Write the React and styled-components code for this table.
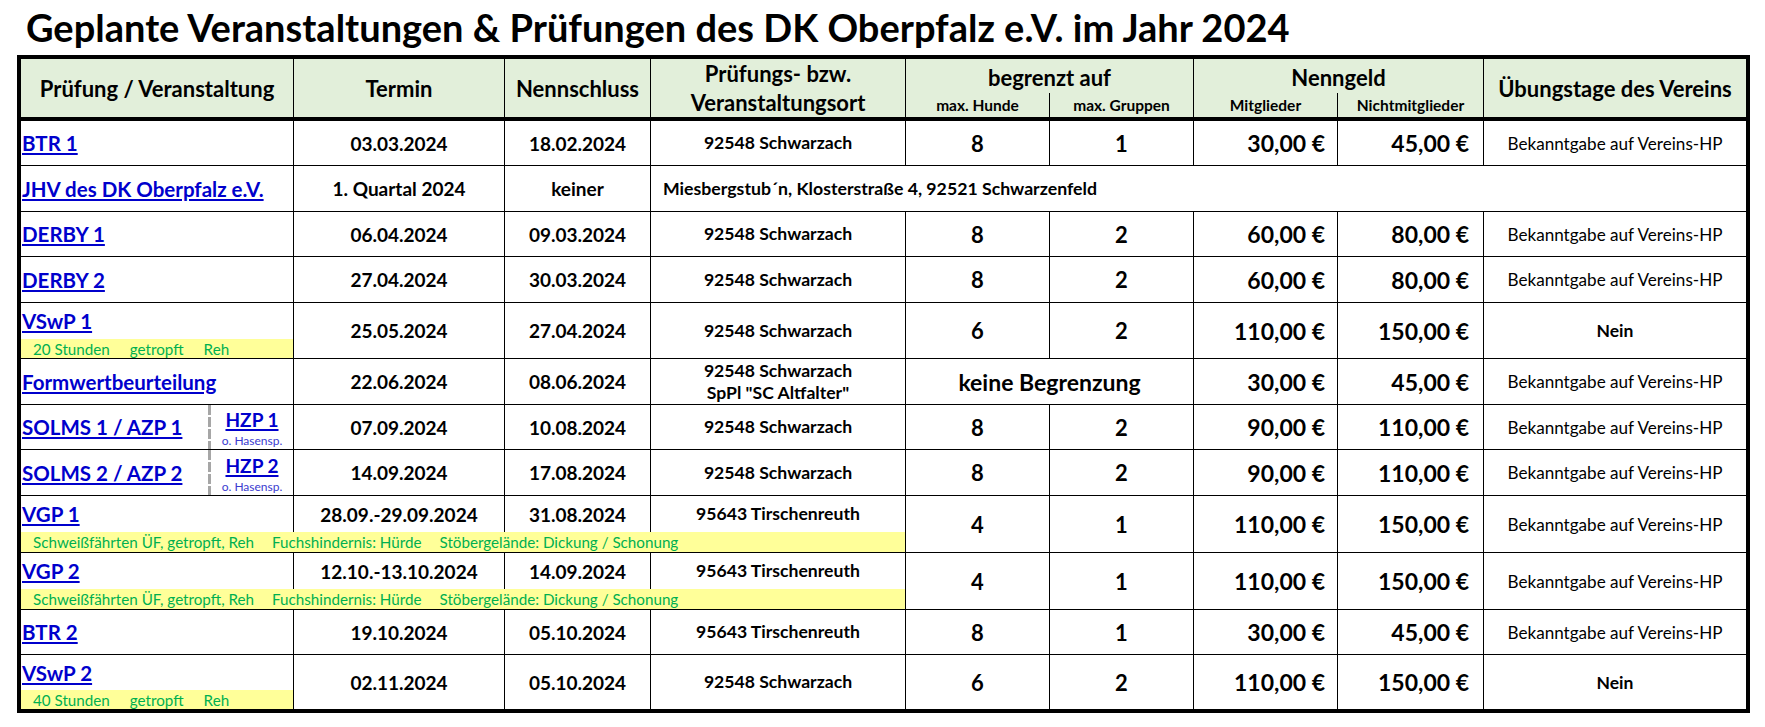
import styled, { createGlobalStyle } from 'styled-components'

const GlobalStyle = createGlobalStyle`
    body {
        margin: 0;
        background: #fff;
        color: #000;
        font-family: Lato, "Open Sans", sans-serif;
    }
`

const COLUMNS = [273, 211, 146, 255, 144, 144, 144, 146, 262]
const INFO = 'Bekanntgabe auf Vereins-HP'
const VGP_NOTE = ['Schweißfährten ÜF, getropft, Reh', 'Fuchshindernis: Hürde', 'Stöbergelände: Dickung / Schonung']

const events = [
    { name: 'BTR 1', termin: '03.03.2024', schluss: '18.02.2024', ort: ['92548 Schwarzach'], hunde: '8', gruppen: '1', mitglieder: '30,00 €', nicht: '45,00 €', info: INFO, height: 45 },
    { name: 'JHV des DK Oberpfalz e.V.', termin: '1. Quartal 2024', schluss: 'keiner', address: 'Miesbergstub´n, Klosterstraße 4, 92521 Schwarzenfeld', height: 46 },
    { name: 'DERBY 1', termin: '06.04.2024', schluss: '09.03.2024', ort: ['92548 Schwarzach'], hunde: '8', gruppen: '2', mitglieder: '60,00 €', nicht: '80,00 €', info: INFO, height: 45 },
    { name: 'DERBY 2', termin: '27.04.2024', schluss: '30.03.2024', ort: ['92548 Schwarzach'], hunde: '8', gruppen: '2', mitglieder: '60,00 €', nicht: '80,00 €', info: INFO, height: 46 },
    { name: 'VSwP 1', termin: '25.05.2024', schluss: '27.04.2024', ort: ['92548 Schwarzach'], hunde: '6', gruppen: '2', mitglieder: '110,00 €', nicht: '150,00 €', info: 'Nein', note: ['20 Stunden', 'getropft', 'Reh'], height: 56 },
    { name: 'Formwertbeurteilung', termin: '22.06.2024', schluss: '08.06.2024', ort: ['92548 Schwarzach', 'SpPl "SC Altfalter"'], noLimit: 'keine Begrenzung', mitglieder: '30,00 €', nicht: '45,00 €', info: INFO, height: 46 },
    { name: 'SOLMS 1 / AZP 1', hzp: 'HZP 1', termin: '07.09.2024', schluss: '10.08.2024', ort: ['92548 Schwarzach'], hunde: '8', gruppen: '2', mitglieder: '90,00 €', nicht: '110,00 €', info: INFO, height: 45 },
    { name: 'SOLMS 2 / AZP 2', hzp: 'HZP 2', termin: '14.09.2024', schluss: '17.08.2024', ort: ['92548 Schwarzach'], hunde: '8', gruppen: '2', mitglieder: '90,00 €', nicht: '110,00 €', info: INFO, height: 46 },
    { name: 'VGP 1', termin: '28.09.-29.09.2024', schluss: '31.08.2024', ort: ['95643 Tirschenreuth'], hunde: '4', gruppen: '1', mitglieder: '110,00 €', nicht: '150,00 €', info: INFO, wideNote: VGP_NOTE, height: 57 },
    { name: 'VGP 2', termin: '12.10.-13.10.2024', schluss: '14.09.2024', ort: ['95643 Tirschenreuth'], hunde: '4', gruppen: '1', mitglieder: '110,00 €', nicht: '150,00 €', info: INFO, wideNote: VGP_NOTE, height: 57 },
    { name: 'BTR 2', termin: '19.10.2024', schluss: '05.10.2024', ort: ['95643 Tirschenreuth'], hunde: '8', gruppen: '1', mitglieder: '30,00 €', nicht: '45,00 €', info: INFO, height: 45 },
    { name: 'VSwP 2', termin: '02.11.2024', schluss: '05.10.2024', ort: ['92548 Schwarzach'], hunde: '6', gruppen: '2', mitglieder: '110,00 €', nicht: '150,00 €', info: 'Nein', note: ['40 Stunden', 'getropft', 'Reh'], height: 54 },
]

// VGP rows are split into a top part and the yellow note strip below
const rowTracks = [34, 28, ...events.flatMap(e => (e.wideNote ? [36, e.height - 36] : [e.height]))]

const App = () => {
    return (
        <>
            <GlobalStyle />
            <Page>
                <Title>Geplante Veranstaltungen &amp; Prüfungen des DK Oberpfalz e.V. im Jahr 2024</Title>
                <Sheet $rows={rowTracks}>
                    <HeadCell $rows={2}>Prüfung / Veranstaltung</HeadCell>
                    <HeadCell $rows={2}>Termin</HeadCell>
                    <HeadCell $rows={2}>Nennschluss</HeadCell>
                    <HeadCell $rows={2}>Prüfungs- bzw.<br />Veranstaltungsort</HeadCell>
                    <GroupHead $cols={2}>begrenzt auf</GroupHead>
                    <GroupHead $cols={2}>Nenngeld</GroupHead>
                    <HeadCell $rows={2} $end>Übungstage des Vereins</HeadCell>
                    <SubHead>max. Hunde</SubHead>
                    <SubHead>max. Gruppen</SubHead>
                    <SubHead>Mitglieder</SubHead>
                    <SubHead>Nichtmitglieder</SubHead>
                    {events.map((e, i) => (
                        <EventRow key={e.name} event={e} foot={i === events.length - 1} />
                    ))}
                </Sheet>
            </Page>
        </>
    )
}

const EventRow = ({ event: e, foot }) => {
    const span = e.wideNote ? 2 : 1
    const top = !!e.wideNote

    if (e.address) {
        return (
            <>
                <EventCell $foot={foot}><Link href='#'>{e.name}</Link></EventCell>
                <DateCell $foot={foot}>{e.termin}</DateCell>
                <DateCell $foot={foot}>{e.schluss}</DateCell>
                <AddressCell $cols={6} $end $foot={foot}>{e.address}</AddressCell>
            </>
        )
    }

    return (
        <>
            {e.note ? (
                <EventCell $foot={foot} $stack>
                    <LinkBox><Link href='#'>{e.name}</Link></LinkBox>
                    <NoteStrip>{e.note.map(n => <span key={n}>{n}</span>)}</NoteStrip>
                </EventCell>
            ) : e.hzp ? (
                <EventCell $foot={foot} $split>
                    <LinkBox $width={186}><Link href='#'>{e.name}</Link></LinkBox>
                    <Divider />
                    <HzpBox>
                        <Link href='#' $size={19}>{e.hzp}</Link>
                        <HzpNote>o. Hasensp.</HzpNote>
                    </HzpBox>
                </EventCell>
            ) : (
                <EventCell $foot={foot} $open={top}><Link href='#'>{e.name}</Link></EventCell>
            )}
            <DateCell $foot={foot} $open={top}>{e.termin}</DateCell>
            <DateCell $foot={foot} $open={top}>{e.schluss}</DateCell>
            <PlaceCell $foot={foot} $open={top}>
                {e.ort.map(line => <div key={line}>{line}</div>)}
            </PlaceCell>
            {e.noLimit ? (
                <CountCell $cols={2} $foot={foot} $size={23}>{e.noLimit}</CountCell>
            ) : (
                <>
                    <CountCell $rows={span} $foot={foot}>{e.hunde}</CountCell>
                    <CountCell $rows={span} $foot={foot}>{e.gruppen}</CountCell>
                </>
            )}
            <FeeCell $rows={span} $foot={foot}>{e.mitglieder}</FeeCell>
            <FeeCell $rows={span} $foot={foot} $pad={14}>{e.nicht}</FeeCell>
            <InfoCell $rows={span} $foot={foot} $end $strong={e.info === 'Nein'}>{e.info}</InfoCell>
            {e.wideNote && (
                <WideNote $cols={4} $foot={foot}>{e.wideNote.map(n => <span key={n}>{n}</span>)}</WideNote>
            )}
        </>
    )
}

export default App

const Page = styled.div`
    width: 1765px;
    height: 727px;
    box-sizing: border-box;
`

const Title = styled.h1`
    margin: 0;
    box-sizing: border-box;
    height: 55px;
    padding: 2px 0 0 26px;
    font-size: 38px;
    line-height: 51px;
    font-weight: 700;
    white-space: nowrap;
`

const Sheet = styled.div`
    margin-left: 17px;
    width: ${COLUMNS.reduce((a, b) => a + b, 0) + 8}px;
    box-sizing: border-box;
    border: 4px solid #000;
    display: grid;
    grid-template-columns: ${COLUMNS.map(c => `${c}px`).join(' ')};
    grid-template-rows: ${({ $rows }) => $rows.map(r => `${r}px`).join(' ')};
`

const Cell = styled.div`
    box-sizing: border-box;
    min-width: 0;
    display: flex;
    flex-direction: column;
    justify-content: center;
    align-items: center;
    text-align: center;
    white-space: nowrap;
    overflow: hidden;
    grid-column: span ${({ $cols = 1 }) => $cols};
    grid-row: span ${({ $rows = 1 }) => $rows};
    border-right: ${({ $end }) => ($end ? 'none' : '1px solid #000')};
    border-bottom: ${({ $foot, $open }) => ($foot || $open ? 'none' : '1px solid #000')};
`

const HeadCell = styled(Cell)`
    background: #e2efda;
    font-size: 22px;
    font-weight: 700;
    line-height: 29px;
    border-bottom: 4px solid #000;
`

const GroupHead = styled(HeadCell)`
    border-bottom: none;
    padding-top: 2px;
`

const SubHead = styled(HeadCell)`
    font-size: 15.5px;
    line-height: 18px;
    justify-content: flex-end;
    padding-bottom: 3px;
`

const EventCell = styled(Cell)`
    align-items: ${({ $stack }) => ($stack ? 'stretch' : 'flex-start')};
    flex-direction: ${({ $split }) => ($split ? 'row' : 'column')};
    justify-content: ${({ $split }) => ($split ? 'flex-start' : 'center')};
    padding-left: ${({ $stack, $split }) => ($stack || $split ? 0 : 1)}px;
    ${({ $split }) => $split && 'align-items: stretch;'}
`

const LinkBox = styled.div`
    flex: ${({ $width }) => ($width ? `0 0 ${$width}px` : '1')};
    display: flex;
    align-items: center;
    padding-left: 1px;
`

const Link = styled.a`
    color: #0000cc;
    font-size: ${({ $size = 20.5 }) => $size}px;
    font-weight: 700;
    line-height: 24px;
    text-decoration: underline;
    text-decoration-thickness: 2px;
    text-underline-offset: 2px;
`

const Divider = styled.span`
    flex: 0 0 3px;
    background: repeating-linear-gradient(to bottom, #a6a6a6 0 10px, transparent 10px 12px);
`

const HzpBox = styled.div`
    flex: 1;
    display: flex;
    flex-direction: column;
    align-items: center;
    justify-content: center;
    padding-top: 4px;
`

const HzpNote = styled.span`
    color: #3b3bd0;
    font-size: 12px;
    line-height: 18px;
`

const NoteStrip = styled.div`
    flex: 0 0 19px;
    display: flex;
    align-items: center;
    gap: 20px;
    padding-left: 12px;
    background: #ffff99;
    color: #00b050;
    font-size: 15.2px;
`

const WideNote = styled(Cell)`
    flex-direction: row;
    justify-content: flex-start;
    gap: 18px;
    padding-left: 12px;
    background: #ffff99;
    color: #00b050;
    font-size: 15.2px;
`

const DateCell = styled(Cell)`
    font-size: 19px;
    font-weight: 700;
`

const PlaceCell = styled(Cell)`
    font-size: 17.6px;
    font-weight: 700;
    line-height: 22px;
`

const AddressCell = styled(Cell)`
    align-items: flex-start;
    padding-left: 12px;
    font-size: 17.7px;
    font-weight: 700;
`

const CountCell = styled(Cell)`
    font-size: ${({ $size = 22 }) => $size}px;
    font-weight: 700;
`

const FeeCell = styled(Cell)`
    align-items: flex-end;
    padding-right: ${({ $pad = 12 }) => $pad}px;
    font-size: 23px;
    font-weight: 700;
`

const InfoCell = styled(Cell)`
    font-size: ${({ $strong }) => ($strong ? 17.5 : 17.1)}px;
    font-weight: ${({ $strong }) => ($strong ? 700 : 400)};
`
